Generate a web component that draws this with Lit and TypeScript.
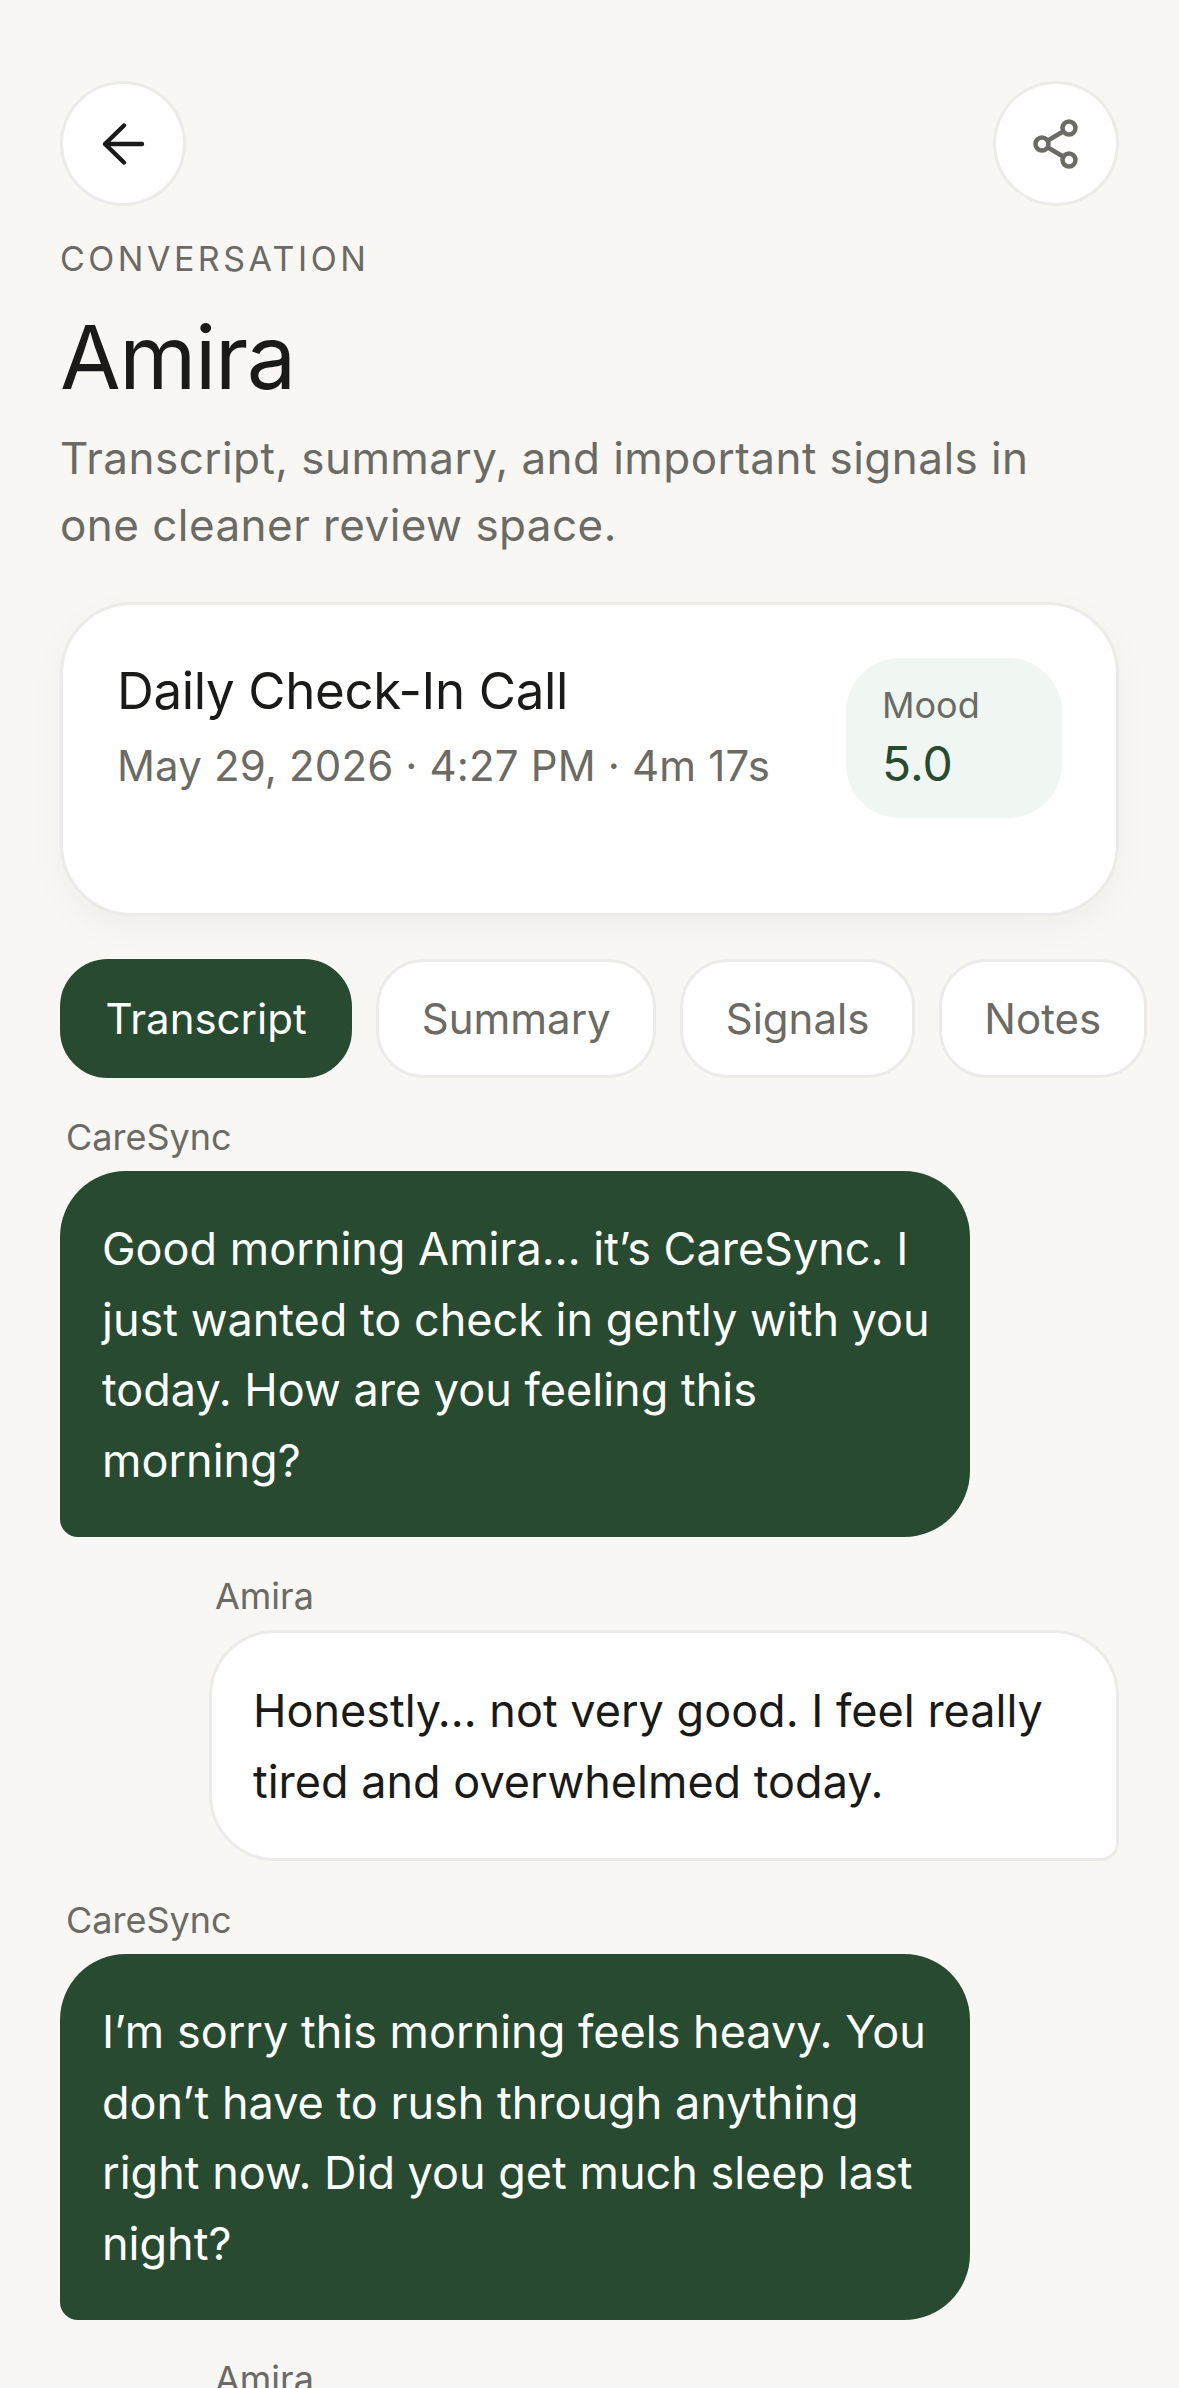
import { LitElement, html, css, nothing } from "lit";
import { customElement } from "lit/decorators.js";

type Message = { from: "bot" | "user"; name: string; text?: string };

const MESSAGES: Message[] = [
  {
    from: "bot",
    name: "CareSync",
    text: "Good morning Amira… it’s CareSync. I just wanted to check in gently with you today. How are you feeling this morning?",
  },
  {
    from: "user",
    name: "Amira",
    text: "Honestly… not very good. I feel really tired and overwhelmed today.",
  },
  {
    from: "bot",
    name: "CareSync",
    text: "I’m sorry this morning feels heavy. You don’t have to rush through anything right now. Did you get much sleep last night?",
  },
  { from: "user", name: "Amira" },
];

const TABS = ["Transcript", "Summary", "Signals", "Notes"];

@customElement("app-root")
export class AppRoot extends LitElement {
  static styles = css`
    :host {
      display: block;
      width: 1179px;
      height: 2388px;
      overflow: hidden;
      background: #f8f7f4;
      color: #1a1a18;
      font-family: Inter, "Liberation Sans", sans-serif;
    }
    .page {
      padding: 81px 60px 0;
    }
    .top {
      display: flex;
      justify-content: space-between;
    }
    .round {
      width: 126px;
      height: 125px;
      box-sizing: border-box;
      border-radius: 50%;
      border: 3px solid #ecebe9;
      background: #fff;
      display: flex;
      align-items: center;
      justify-content: center;
    }
    .eyebrow {
      margin-top: 32px;
      font-size: 34px;
      line-height: 42px;
      letter-spacing: 3.5px;
      color: #6b6a64;
    }
    h1 {
      margin: 24px 0 0;
      font-size: 88px;
      line-height: 106px;
      font-weight: 400;
      letter-spacing: -1.4px;
    }
    .sub {
      margin: 15px 0 0;
      max-width: 1020px;
      font-size: 44px;
      line-height: 67px;
      color: #6b6a64;
      letter-spacing: 0.45px;
    }
    .card {
      margin-top: 43px;
      height: 314px;
      box-sizing: border-box;
      padding: 52px 54px 0 54px;
      border: 3px solid #ecebe9;
      border-radius: 72px;
      background: #fff;
      box-shadow: 0 12px 36px rgba(0, 0, 0, 0.04);
      display: flex;
      justify-content: space-between;
      align-items: flex-start;
    }
    .card h2 {
      margin: 0;
      padding-top: 3px;
      font-size: 51px;
      line-height: 62px;
      font-weight: 400;
      letter-spacing: -0.35px;
    }
    .meta {
      margin-top: 18px;
      font-size: 42px;
      line-height: 52px;
      letter-spacing: 0.15px;
      color: #6b6a64;
    }
    .mood {
      width: 216px;
      height: 160px;
      margin-top: 1px;
      box-sizing: border-box;
      padding: 25px 36px;
      border-radius: 54px;
      background: #f0f6f2;
    }
    .mood-label {
      font-size: 36px;
      line-height: 44px;
      color: #6b6a64;
    }
    .mood-value {
      margin-top: 7px;
      font-size: 48px;
      line-height: 60px;
      color: #284a30;
    }
    .tabs {
      margin-top: 43px;
      display: flex;
      gap: 24px;
    }
    .tab {
      flex: none;
      height: 119px;
      box-sizing: border-box;
      padding: 0 42.5px;
      border: 3px solid #ecebe9;
      border-radius: 48px;
      background: #fff;
      display: flex;
      align-items: center;
      font-size: 42px;
      color: #6b6a64;
    }
    .tab.active {
      background: #284a30;
      border-color: #284a30;
      color: #fff;
    }
    .thread {
      margin-top: 37px;
      display: flex;
      flex-direction: column;
      gap: 37px;
    }
    .msg {
      display: flex;
      flex-direction: column;
      width: 910px;
    }
    .msg.user {
      align-self: flex-end;
    }
    .name {
      padding-left: 6px;
      font-size: 36px;
      line-height: 44px;
      color: #6b6a64;
    }
    .bubble {
      margin-top: 12px;
      box-sizing: border-box;
      padding: 43px 30px 41px 42px;
      font-size: 45px;
      line-height: 70.5px;
    }
    .bot .bubble {
      background: #284a30;
      color: #fff;
      border-radius: 66px 66px 66px 18px;
    }
    .user .bubble {
      padding: 43px 30px 41px 41px;
      background: #fff;
      border: 3px solid #ecebe9;
      border-radius: 66px 66px 18px 66px;
    }
  `;

  render() {
    return html`
      <div class="page">
        <div class="top">
          <div class="round">
            <svg width="48" height="48" viewBox="0 0 48 48" fill="none" stroke="#1a1a18" stroke-width="4.4" stroke-linecap="round" stroke-linejoin="round">
              <path d="M43 24H6M25 5.5 6 24l19 18.5" />
            </svg>
          </div>
          <div class="round">
            <svg width="48" height="54" viewBox="0 0 48 54" fill="none" stroke="#6b6a64" stroke-width="4.5">
              <circle cx="10" cy="27" r="6.5" />
              <circle cx="37" cy="11" r="6.5" />
              <circle cx="37" cy="43" r="6.5" />
              <path d="M16 23.5l15-9M16 30.5l15 9" />
            </svg>
          </div>
        </div>
        <div class="eyebrow">CONVERSATION</div>
        <h1>Amira</h1>
        <p class="sub">Transcript, summary, and important signals in one cleaner review space.</p>
        <div class="card">
          <div>
            <h2>Daily Check-In Call</h2>
            <div class="meta">May 29, 2026 · 4:27 PM · 4m 17s</div>
          </div>
          <div class="mood">
            <div class="mood-label">Mood</div>
            <div class="mood-value">5.0</div>
          </div>
        </div>
        <div class="tabs">
          ${TABS.map((t, i) => html`<div class="tab ${i === 0 ? "active" : ""}">${t}</div>`)}
        </div>
        <div class="thread">
          ${MESSAGES.map(
            (m) => html`
              <div class="msg ${m.from}">
                <div class="name">${m.name}</div>
                ${m.text ? html`<div class="bubble">${m.text}</div>` : nothing}
              </div>
            `
          )}
        </div>
      </div>
    `;
  }
}
